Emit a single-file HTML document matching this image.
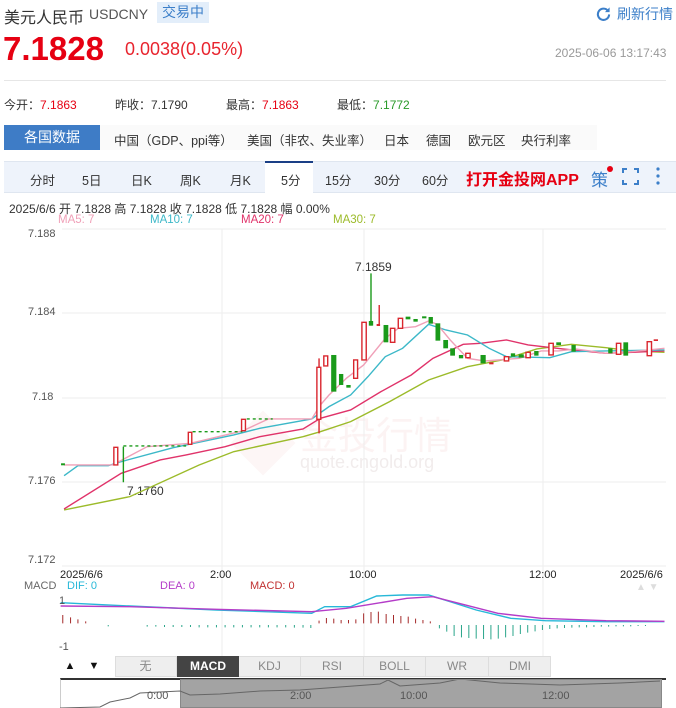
<!DOCTYPE html>
<html><head><meta charset="utf-8"><style>
*{margin:0;padding:0;box-sizing:border-box}
body{width:676px;height:708px;overflow:hidden;background:#fff;font-family:"Liberation Sans","Noto Sans CJK SC",sans-serif;position:relative;color:#333}
.a{position:absolute;white-space:nowrap}
</style></head><body>
<div class="a" style="left:4px;top:4px;font-size:16px;color:#333">美元人民币</div>
<div class="a" style="left:89px;top:6px;font-size:14px;color:#555">USDCNY</div>
<div class="a" style="left:157px;top:2px;width:52px;height:21px;background:#e3eefa;color:#3c7fc9;font-size:14px;line-height:21px;text-align:center">交易中</div>
<svg class="a" style="left:596px;top:6px" width="15" height="15" viewBox="0 0 16 16"><path d="M13 5.5A6 6 0 1 0 14 9" fill="none" stroke="#3c7fc9" stroke-width="2.2"/><path d="M14.5 1.5v5h-5z" fill="#3c7fc9"/></svg>
<div class="a" style="left:617px;top:4px;font-size:14px;color:#3c7fc9">刷新行情</div>
<div class="a" style="left:3px;top:30px;font-size:33px;font-weight:bold;color:#e60012">7.1828</div>
<div class="a" style="left:125px;top:39px;font-size:18px;color:#e8242e">0.0038(0.05%)</div>
<div class="a" style="left:555px;top:46px;font-size:12px;color:#999">2025-06-06 13:17:43</div>
<div class="a" style="left:4px;top:80px;width:662px;height:1px;background:#e6e6e6"></div>
<div class="a" style="left:4px;top:96px;font-size:12px">今开：<span style="color:#e60012">7.1863</span></div>
<div class="a" style="left:115px;top:96px;font-size:12px">昨收：7.1790</div>
<div class="a" style="left:226px;top:96px;font-size:12px">最高：<span style="color:#e60012">7.1863</span></div>
<div class="a" style="left:337px;top:96px;font-size:12px">最低：<span style="color:#2a9a2a">7.1772</span></div>
<div class="a" style="left:4px;top:125px;width:593px;height:25px;background:#fafafa"></div>
<div class="a" style="left:4px;top:125px;width:96px;height:25px;background:#3e7cc6;color:#fff;font-size:14px;line-height:25px;text-align:center">各国数据</div>
<div class="a" style="left:114px;top:130px;font-size:12.5px">中国（GDP、ppi等）</div>
<div class="a" style="left:247px;top:130px;font-size:12.5px">美国（非农、失业率）</div>
<div class="a" style="left:384px;top:130px;font-size:12.5px">日本</div>
<div class="a" style="left:426px;top:130px;font-size:12.5px">德国</div>
<div class="a" style="left:468px;top:130px;font-size:12.5px">欧元区</div>
<div class="a" style="left:521px;top:130px;font-size:12.5px">央行利率</div>
<div class="a" style="left:4px;top:161px;width:672px;height:32px;background:#eef3fb;border-top:1px solid #dfe6f0;border-bottom:1px solid #dfe6f0"></div>
<div class="a" style="left:265px;top:161px;width:48px;height:32px;background:#fff;border-top:2px solid #1a3f86"></div>
<div class="a" style="top:170px;left:30px;font-size:12.5px;word-spacing:0">分时</div>
<div class="a" style="top:170px;left:82px;font-size:12.5px">5日</div>
<div class="a" style="top:170px;left:131px;font-size:12.5px">日K</div>
<div class="a" style="top:170px;left:180px;font-size:12.5px">周K</div>
<div class="a" style="top:170px;left:230px;font-size:12.5px">月K</div>
<div class="a" style="top:170px;left:281px;font-size:12.5px">5分</div>
<div class="a" style="top:170px;left:325px;font-size:12.5px">15分</div>
<div class="a" style="top:170px;left:374px;font-size:12.5px">30分</div>
<div class="a" style="top:170px;left:422px;font-size:12.5px">60分</div>
<div class="a" style="top:166px;left:466px;font-size:16px;font-weight:bold;color:#e60012">打开金投网APP</div>
<div class="a" style="top:166px;left:591px;font-size:17px;color:#3c7fc9">策</div>
<div class="a" style="top:166px;left:607px;width:6px;height:6px;border-radius:3px;background:#e60012"></div>
<svg class="a" style="left:622px;top:168px" width="17" height="17"><path d="M1 5V1h4M12 1h4v4M16 12v4h-4M5 16H1v-4" fill="none" stroke="#3c7fc9" stroke-width="2"/></svg>
<svg class="a" style="left:655px;top:167px" width="6" height="18"><circle cx="3" cy="2" r="1.6" fill="#3c7fc9"/><circle cx="3" cy="9" r="1.6" fill="#3c7fc9"/><circle cx="3" cy="16" r="1.6" fill="#3c7fc9"/></svg>
<div class="a" style="left:9px;top:200px;font-size:12px;color:#333">2025/6/6 开 7.1828 高 7.1828 收 7.1828 低 7.1828 幅 0.00%</div>
<div class="a" style="left:58px;top:214px;font-size:11.5px;color:#f0a0b8">MA5: 7</div>
<div class="a" style="left:150px;top:214px;font-size:11.5px;color:#3cb8c8">MA10: 7</div>
<div class="a" style="left:241px;top:214px;font-size:11.5px;color:#e0336a">MA20: 7</div>
<div class="a" style="left:333px;top:214px;font-size:11.5px;color:#9cbb2a">MA30: 7</div>
<div class="a" style="left:28px;top:228px;font-size:11px;color:#555">7.188</div>
<div class="a" style="left:28px;top:306px;font-size:11px;color:#555">7.184</div>
<div class="a" style="left:32px;top:391px;font-size:11px;color:#555">7.18</div>
<div class="a" style="left:28px;top:475px;font-size:11px;color:#555">7.176</div>
<div class="a" style="left:28px;top:554px;font-size:11px;color:#555">7.172</div>
<div class="a" style="left:355px;top:260px;font-size:12px;color:#333">7.1859</div>
<div class="a" style="left:127px;top:484px;font-size:12px;color:#333">7.1760</div>
<div class="a" style="left:300px;top:405px;font-size:38px;color:rgba(230,160,160,0.13)">金投行情</div>
<div class="a" style="left:300px;top:452px;font-size:18px;color:rgba(200,180,180,0.25)">quote.cngold.org</div>
<div class="a" style="left:240px;top:420px;width:46px;height:46px;transform:rotate(45deg);background:rgba(230,150,150,0.09)"></div>
<svg class="a" style="left:0;top:0" width="676" height="708">
<g stroke="#eee" stroke-width="1"><path d="M62 229H666M62 313H666M62 398H666M62 482H666M62 566H666M222 229V660M364 229V660M543 229V660"/></g>
<g transform="translate(0,225) scale(0.4329,0.3333)" fill="none" stroke-width="1.4">
<polyline vector-effect="non-scaling-stroke" stroke="#9cbb2a" points="148,855 300,815 460,720 540,680 700,635 740,620 810,590 900,530 990,465 1080,425 1160,405 1240,372 1320,358 1400,368 1460,378 1535,382"/>
<polyline vector-effect="non-scaling-stroke" stroke="#e0336a" points="148,852 280,745 370,705 430,690 520,665 600,635 700,612 740,580 810,555 880,500 950,450 1000,400 1070,358 1110,355 1170,345 1220,360 1300,372 1400,385 1535,378"/>
<polyline vector-effect="non-scaling-stroke" stroke="#3cb8c8" points="148,752 180,722 250,722 280,710 400,668 540,630 600,610 720,582 760,545 810,510 850,455 890,395 930,370 990,298 1030,315 1080,330 1130,370 1170,395 1270,398 1320,380 1400,378 1535,375"/>
<polyline vector-effect="non-scaling-stroke" stroke="#f0a0b8" points="148,720 260,720 340,665 440,655 560,618 620,582 720,582 740,540 760,510 800,460 840,420 890,340 920,310 960,305 990,288 1010,298 1040,345 1080,400 1120,408 1200,400 1250,378 1290,378 1330,372 1400,385 1460,380 1535,370"/>
<path vector-effect="non-scaling-stroke" stroke="#1a9a1a" stroke-dasharray="3 3" d="M285 663H430M445 620H560M570 582H630"/>
<g stroke="#1a9a1a"><path vector-effect="non-scaling-stroke" d="M285 665V772M857 145V302"/></g>
<g stroke="#d9262e" fill="#fff"><path vector-effect="non-scaling-stroke" d="M737 400V625M876 240V302"/>
<rect vector-effect="non-scaling-stroke" x="263" y="667" width="9" height="53"/><rect vector-effect="non-scaling-stroke" x="435" y="622" width="8" height="36"/><rect vector-effect="non-scaling-stroke" x="558" y="583" width="9" height="34"/><rect vector-effect="non-scaling-stroke" x="732" y="427" width="9" height="156"/><rect vector-effect="non-scaling-stroke" x="748" y="393" width="9" height="30"/><rect vector-effect="non-scaling-stroke" x="817" y="405" width="9" height="55"/><rect vector-effect="non-scaling-stroke" x="836" y="292" width="10" height="113"/><rect vector-effect="non-scaling-stroke" x="902" y="310" width="10" height="42"/><rect vector-effect="non-scaling-stroke" x="920" y="280" width="10" height="30"/><rect vector-effect="non-scaling-stroke" x="1076" y="385" width="10" height="13"/><rect vector-effect="non-scaling-stroke" x="1165" y="395" width="10" height="13"/><rect vector-effect="non-scaling-stroke" x="1215" y="382" width="10" height="16"/><rect vector-effect="non-scaling-stroke" x="1268" y="355" width="10" height="35"/><rect vector-effect="non-scaling-stroke" x="1424" y="355" width="10" height="33"/><rect vector-effect="non-scaling-stroke" x="1495" y="350" width="10" height="42"/></g>
<g fill="#d9262e" stroke="none"><rect x="870" y="297" width="8" height="6"/><rect x="1130" y="412" width="10" height="6"/><rect x="1510" y="343" width="10" height="5"/></g>
<g fill="#1a9a1a" stroke="none"><rect x="141" y="715" width="9" height="6"/><rect x="852" y="288" width="10" height="14"/><rect x="765" y="390" width="12" height="110"/><rect x="783" y="447" width="10" height="33"/><rect x="800" y="480" width="10" height="8"/><rect x="886" y="300" width="11" height="52"/><rect x="937" y="275" width="11" height="8"/><rect x="955" y="282" width="10" height="8"/><rect x="975" y="274" width="10" height="6"/><rect x="990" y="276" width="10" height="20"/><rect x="1006" y="295" width="11" height="52"/><rect x="1024" y="345" width="11" height="25"/><rect x="1040" y="370" width="11" height="22"/><rect x="1060" y="390" width="10" height="10"/><rect x="1110" y="390" width="12" height="25"/><rect x="1180" y="385" width="10" height="10"/><rect x="1198" y="388" width="12" height="10"/><rect x="1234" y="378" width="10" height="14"/><rect x="1285" y="352" width="11" height="8"/><rect x="1320" y="360" width="10" height="20"/><rect x="1405" y="370" width="10" height="15"/><rect x="1440" y="352" width="11" height="40"/></g>
</g>
<g transform="translate(0,560) scale(0.4329,0.3333)" fill="none">
<g stroke="#a52a2a"><path vector-effect="non-scaling-stroke" d="M145 190V165M163 190V172M180 190V178M198 190V184M737 190V182M754 190V174M771 190V176M788 190V180M805 190V180M822 190V178M840 190V160M857 190V156M874 190V155M892 190V162M909 190V165M926 190V168M943 190V170M960 190V176M977 190V180M994 190V184"/></g>
<g stroke="#2aa58a"><path vector-effect="non-scaling-stroke" d="M1015 195V205M1032 195V215M1049 195V228M1066 195V232M1083 195V234M1100 195V236M1117 195V237M1134 195V238M1151 195V236M1168 195V232M1185 195V228M1202 195V222M1219 195V218M1236 195V214M1253 195V210M1270 195V207M1287 195V205M1304 195V204M1321 195V203M1338 195V202M1355 195V202M1372 195V201M1389 195V200M1406 195V200M1423 195V199M1440 195V199M1457 195V199M1474 195V198M1491 195V198M250 195V199M340 195V200M360 195V200M380 195V201M400 195V201M420 195V201M440 195V201M460 195V202M480 195V202M500 195V202M520 195V202M540 195V202M560 195V202M580 195V202M600 195V202M620 195V202M640 195V202M660 195V202M680 195V203M700 195V203M718 195V204"/></g>
<polyline vector-effect="non-scaling-stroke" stroke-width="1.4" stroke="#27b8d8" points="140,128 300,138 500,150 720,160 750,140 810,140 870,108 930,105 990,105 1040,125 1100,150 1180,175 1260,182 1400,185 1535,185"/>
<polyline vector-effect="non-scaling-stroke" stroke-width="1.4" stroke="#b43cc8" points="140,138 300,140 500,148 720,155 800,145 870,130 940,115 1000,110 1060,130 1150,160 1250,175 1400,182 1535,184"/>
</g>
</svg>
<div class="a" style="left:60px;top:569px;font-size:11px;color:#222">2025/6/6</div>
<div class="a" style="left:210px;top:569px;font-size:11px;color:#222">2:00</div>
<div class="a" style="left:349px;top:569px;font-size:11px;color:#222">10:00</div>
<div class="a" style="left:529px;top:569px;font-size:11px;color:#222">12:00</div>
<div class="a" style="left:620px;top:569px;font-size:11px;color:#222">2025/6/6</div>
<div class="a" style="left:24px;top:580px;font-size:11px;color:#666">MACD</div>
<div class="a" style="left:67px;top:580px;font-size:11px;color:#27b8d8">DIF: 0</div>
<div class="a" style="left:160px;top:580px;font-size:11px;color:#b43cc8">DEA: 0</div>
<div class="a" style="left:250px;top:580px;font-size:11px;color:#c03030">MACD: 0</div>
<div class="a" style="left:636px;top:582px;font-size:10px;color:#ddd">▲ ▼</div>
<div class="a" style="left:59px;top:595px;font-size:11px;color:#555">1</div>
<div class="a" style="left:59px;top:641px;font-size:11px;color:#555">-1</div>
<div class="a" style="left:60px;top:656px;width:20px;height:21px;font-size:11px;line-height:21px;text-align:center;color:#111">▲</div>
<div class="a" style="left:84px;top:656px;width:20px;height:21px;font-size:11px;line-height:21px;text-align:center;color:#111">▼</div>
<div class="a" style="left:115px;top:656px;width:436px;height:21px;background:#eee;border:1px solid #ddd"></div>
<div class="a" style="left:115px;top:656px;width:62px;height:21px;font-size:12px;line-height:21px;text-align:center;color:#888;border-right:1px solid #ddd">无</div>
<div class="a" style="left:177px;top:656px;width:62px;height:21px;font-size:12px;line-height:21px;text-align:center;color:#fff;background:#444;font-weight:bold">MACD</div>
<div class="a" style="left:239px;top:656px;width:62px;height:21px;font-size:12px;line-height:21px;text-align:center;color:#888;border-right:1px solid #ddd">KDJ</div>
<div class="a" style="left:301px;top:656px;width:63px;height:21px;font-size:12px;line-height:21px;text-align:center;color:#888;border-right:1px solid #ddd">RSI</div>
<div class="a" style="left:364px;top:656px;width:62px;height:21px;font-size:12px;line-height:21px;text-align:center;color:#888;border-right:1px solid #ddd">BOLL</div>
<div class="a" style="left:426px;top:656px;width:63px;height:21px;font-size:12px;line-height:21px;text-align:center;color:#888;border-right:1px solid #ddd">WR</div>
<div class="a" style="left:489px;top:656px;width:62px;height:21px;font-size:12px;line-height:21px;text-align:center;color:#888">DMI</div>
<div class="a" style="left:60px;top:678px;width:606px;height:30px;border-top:2px solid #333;border-left:1px solid #ccc"></div>
<div class="a" style="left:180px;top:679px;width:482px;height:29px;background:#a3a3a3;border:1px solid #888"></div>
<svg class="a" style="left:60px;top:680px" width="606" height="28"><polyline fill="none" stroke="#666" stroke-width="1" points="0,28 40,27 50,22 70,18 80,13 100,12 120,11 130,15 160,14 200,11 240,10 280,7 320,4 328,0 340,6 380,3 400,-1 440,3 500,5 560,3 600,1"/></svg>
<div class="a" style="left:147px;top:690px;font-size:11px;color:#555">0:00</div>
<div class="a" style="left:290px;top:690px;font-size:11px;color:#555">2:00</div>
<div class="a" style="left:400px;top:690px;font-size:11px;color:#555">10:00</div>
<div class="a" style="left:542px;top:690px;font-size:11px;color:#555">12:00</div>
</body></html>
